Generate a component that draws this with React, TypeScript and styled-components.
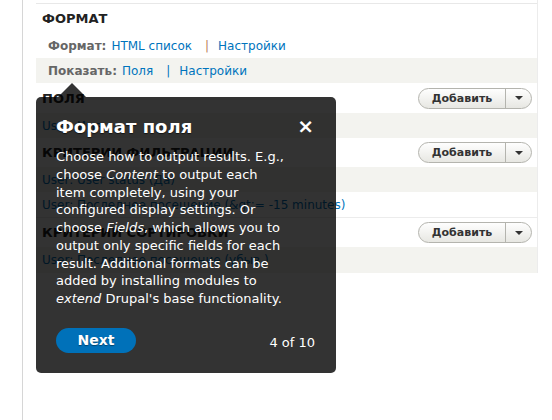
import styled, { createGlobalStyle } from "styled-components";

const GlobalStyle = createGlobalStyle`
  html, body {
    margin: 0;
    padding: 0;
    background: #fff;
  }
  body {
    font-family: "DejaVu Sans", Verdana, sans-serif;
    font-size: 13px;
    color: #333;
  }
`;

const LINK = "#0074bd";
const ROW_GRAY = "#f3f3ef";

const Page = styled.div`
  position: relative;
  width: 552px;
  height: 420px;
  overflow: hidden;
`;

const Frame = styled.div`
  margin-left: 22px;
  height: 420px;
  border-left: 1px solid #d6d6d6;
  padding-left: 13px;
`;

const Column = styled.div`
  width: 501px;
  border-right: 1px solid #ececec;
`;

const TopStrip = styled.div`
  height: 3px;
  border-bottom: 1px solid #e8e8e8;
`;

const Heading = styled.div<{ $h: number }>`
  display: flex;
  align-items: center;
  justify-content: space-between;
  height: ${(p) => p.$h}px;
  padding: 0 5px 0 6px;
  background: #fff;
  box-sizing: border-box;
`;

const HeadingText = styled.span`
  font-size: 13px;
  font-weight: bold;
  text-transform: uppercase;
  color: #222;
`;

const Row = styled.div<{ $gray?: boolean; $h?: number; $line?: boolean }>`
  display: flex;
  align-items: center;
  height: ${(p) => p.$h ?? 25}px;
  padding-left: 6px;
  background: ${(p) => (p.$gray ? ROW_GRAY : "#fff")};
  border-bottom: ${(p) => (p.$line ? "1px solid #ececec" : "none")};
  font-size: 12px;
`;

const SettingRow = styled(Row)`
  padding-left: 12px;
`;

const Label = styled.span`
  font-weight: bold;
  color: #666;
  margin-right: 5px;
`;

const Link = styled.a`
  color: ${LINK};
  text-decoration: none;
`;

const Sep = styled.span<{ $color: string }>`
  color: ${(p) => p.$color};
  margin: 0 9px 0 13px;
`;

const SplitButton = styled.div`
  display: flex;
  height: 21px;
  border: 1px solid #b4b4ae;
  border-radius: 11px;
  background: linear-gradient(#fefefe, #e7e7e2);
  box-sizing: border-box;
  overflow: hidden;
`;

const SplitMain = styled.span`
  display: flex;
  align-items: center;
  justify-content: center;
  width: 86px;
  font-size: 11px;
  font-weight: bold;
  color: #333;
  border-right: 1px solid #b4b4ae;
`;

const SplitCaret = styled.span`
  display: flex;
  align-items: center;
  justify-content: center;
  width: 25px;
  &::after {
    content: "";
    border-left: 4px solid transparent;
    border-right: 4px solid transparent;
    border-top: 4px solid #333;
  }
`;

const Tip = styled.div`
  position: absolute;
  left: 36px;
  top: 97px;
  width: 300px;
  height: 276px;
  box-sizing: border-box;
  padding: 16px 21px 20px 20px;
  background: rgba(0, 0, 0, 0.8);
  border-radius: 5px;
  color: #fff;
  display: flex;
  flex-direction: column;
  &::before {
    content: "";
    position: absolute;
    left: 22px;
    top: -14px;
    border-left: 14px solid transparent;
    border-right: 14px solid transparent;
    border-bottom: 14px solid rgba(0, 0, 0, 0.8);
  }
`;

const TipHead = styled.div`
  display: flex;
  align-items: center;
  justify-content: space-between;
  height: 26px;
`;

const TipTitle = styled.h2`
  margin: 0;
  font-size: 18px;
  font-weight: bold;
  text-shadow: 0 1px 1px rgba(0, 0, 0, 0.6);
`;

const Close = styled.span`
  font-size: 20px;
  font-weight: bold;
  line-height: 1;
  margin-right: 1px;
`;

const TipBody = styled.p`
  margin: 9px 0 0;
  width: 232px;
  font-size: 13px;
  line-height: 17.75px;
  em {
    font-style: italic;
  }
`;

const TipFoot = styled.div`
  margin-top: auto;
  display: flex;
  align-items: center;
  justify-content: space-between;
`;

const NextButton = styled.button`
  width: 80px;
  height: 25px;
  border: none;
  border-radius: 13px;
  background: #0071b9;
  color: #fff;
  font-family: "DejaVu Sans", Verdana, sans-serif;
  font-size: 14px;
  font-weight: bold;
  padding: 0 0 2px;
  text-shadow: 0 1px 1px rgba(0, 0, 0, 0.4);
`;

const Counter = styled.span`
  font-size: 13px;
  padding-top: 4px;
`;

const AddButton = () => (
  <SplitButton>
    <SplitMain>Добавить</SplitMain>
    <SplitCaret />
  </SplitButton>
);

export default function App() {
  return (
    <Page>
      <GlobalStyle />
      <Frame>
        <Column>
          <TopStrip />
          <Heading $h={29}>
            <HeadingText>Формат</HeadingText>
          </Heading>
          <SettingRow>
            <Label>Формат:</Label>
            <Link href="#">HTML список</Link>
            <Sep $color="#b9805a">|</Sep>
            <Link href="#">Настройки</Link>
          </SettingRow>
          <SettingRow $gray>
            <Label>Показать:</Label>
            <Link href="#">Поля</Link>
            <Sep $color={LINK}>|</Sep>
            <Link href="#">Настройки</Link>
          </SettingRow>
          <Heading $h={30}>
            <HeadingText>Поля</HeadingText>
            <AddButton />
          </Heading>
          <Row $gray>
            <Link href="#">User: Имя</Link>
          </Row>
          <Heading $h={29}>
            <HeadingText>Критерии фильтрации</HeadingText>
            <AddButton />
          </Heading>
          <Row $gray>
            <Link href="#">User: User status (Да)</Link>
          </Row>
          <Row $h={25} $line>
            <Link href="#">User: Последнее посещение (&amp;gt;= -15 minutes)</Link>
          </Row>
          <Heading $h={29}>
            <HeadingText>Критерии сортировки</HeadingText>
            <AddButton />
          </Heading>
          <Row $gray $h={26}>
            <Link href="#">User: Последнее посещение (убыв.)</Link>
          </Row>
        </Column>
      </Frame>

      <Tip>
        <TipHead>
          <TipTitle>Формат поля</TipTitle>
          <Close>×</Close>
        </TipHead>
        <TipBody>
          Choose how to output results. E.g., choose <em>Content</em> to output
          each item completely, using your configured display settings. Or
          choose <em>Fields</em>, which allows you to output only specific
          fields for each result. Additional formats can be added by installing
          modules to <em>extend</em> Drupal's base functionality.
        </TipBody>
        <TipFoot>
          <NextButton>Next</NextButton>
          <Counter>4 of 10</Counter>
        </TipFoot>
      </Tip>
    </Page>
  );
}
